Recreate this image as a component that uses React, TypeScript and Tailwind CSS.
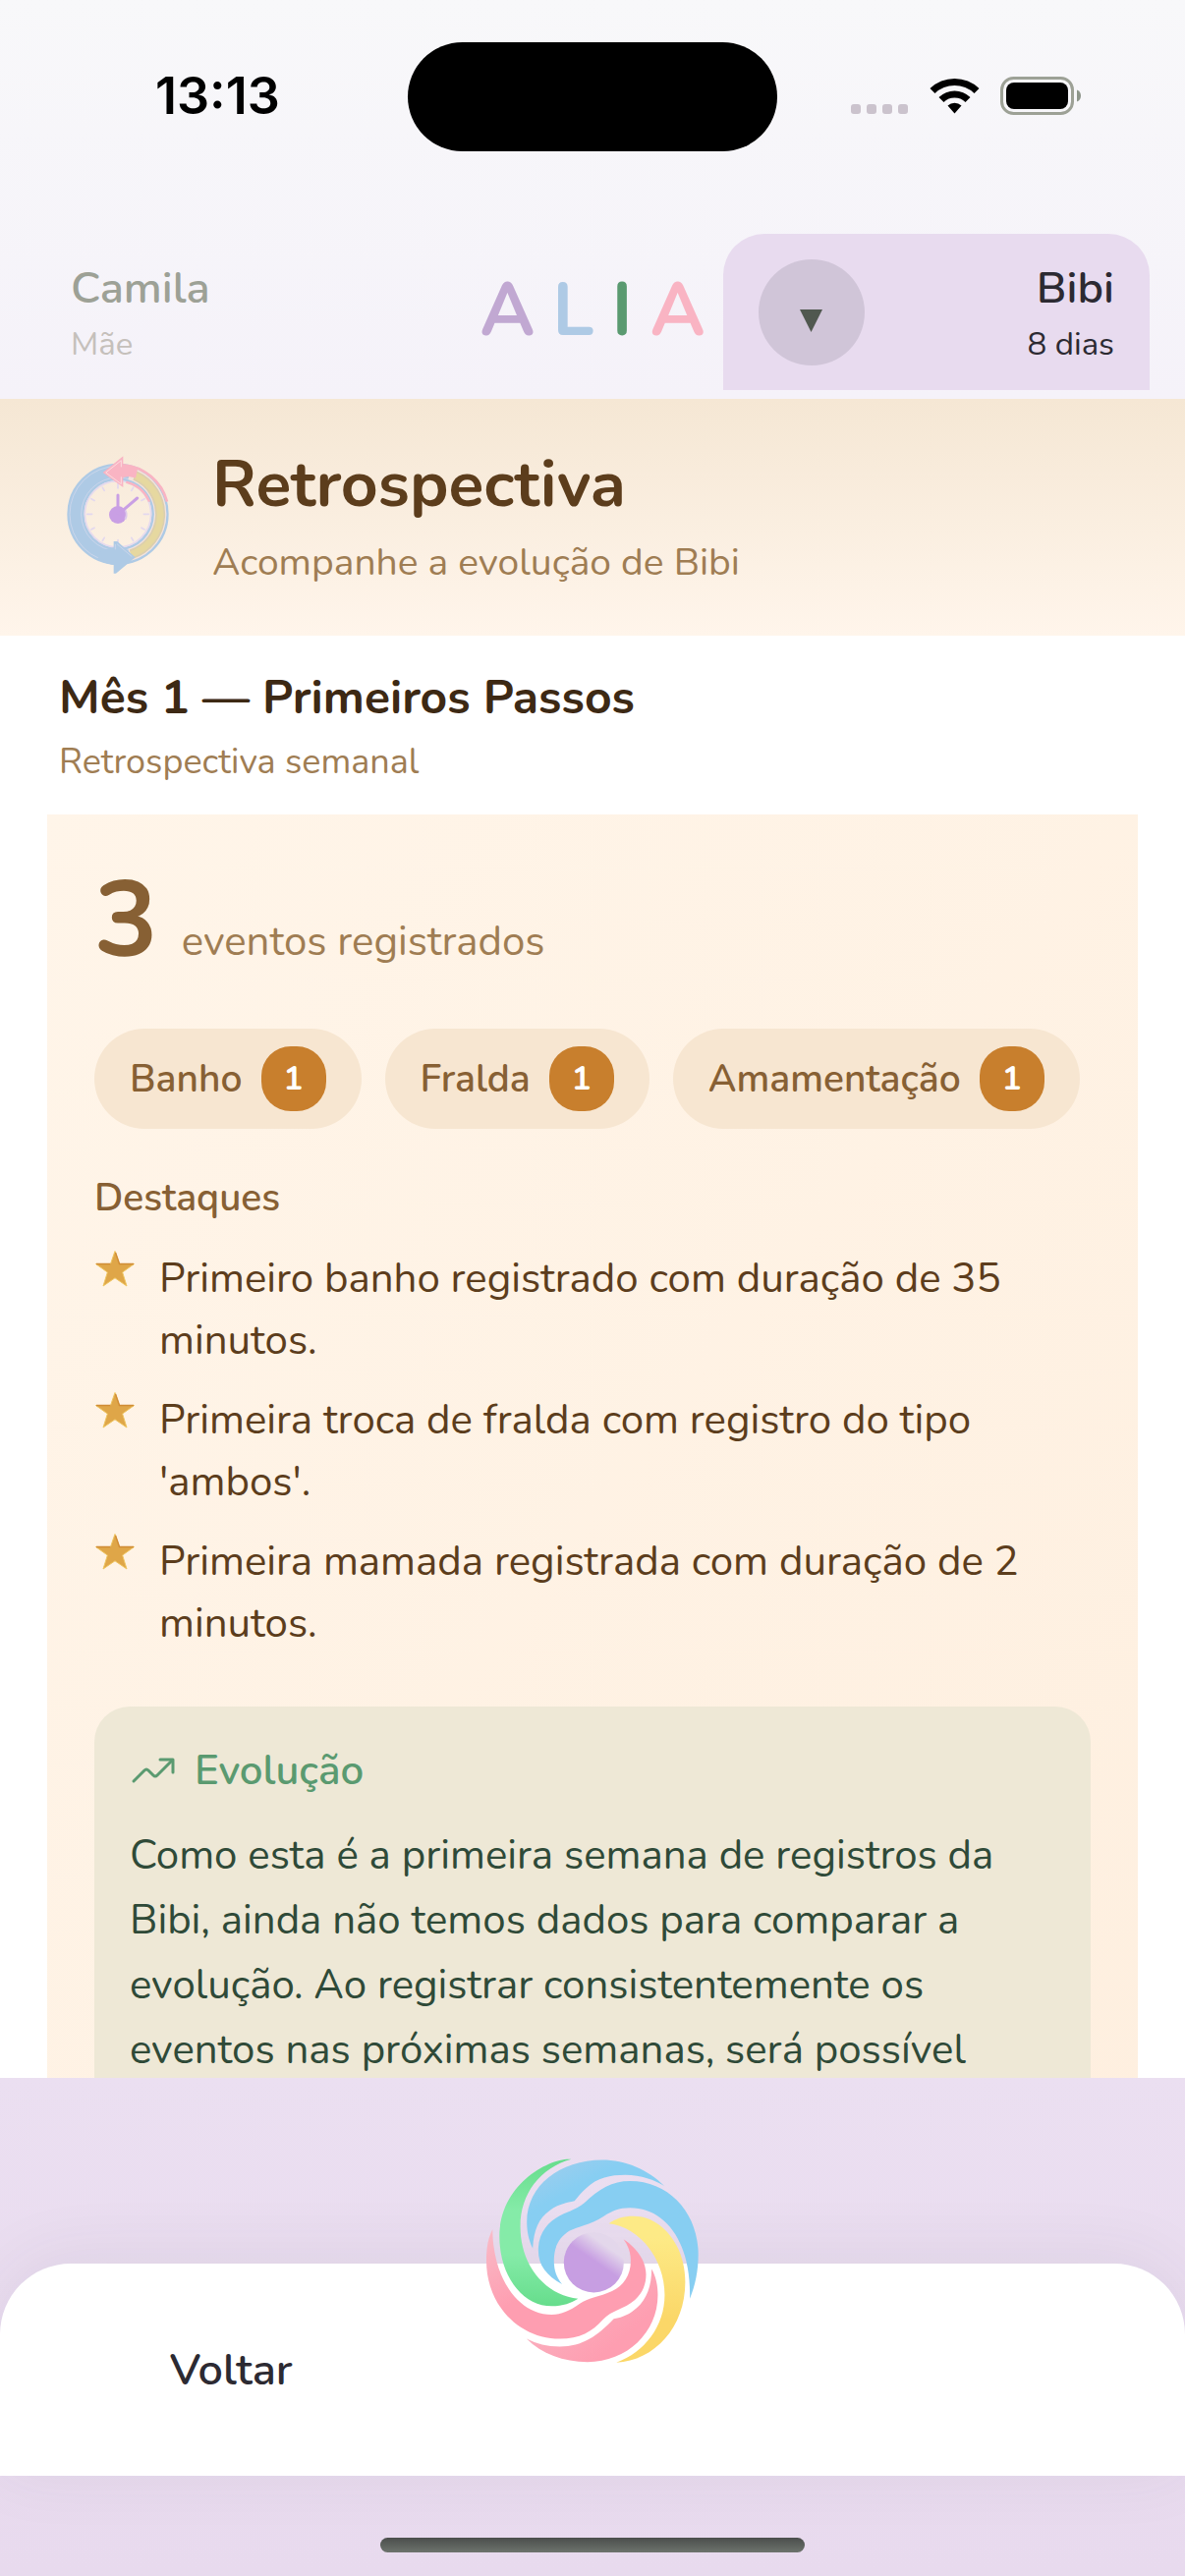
const categories = [
  { label: "Banho", count: 1 },
  { label: "Fralda", count: 1 },
  { label: "Amamentação", count: 1 },
];

const highlights = [
  "Primeiro banho registrado com duração de 35 minutos.",
  "Primeira troca de fralda com registro do tipo 'ambos'.",
  "Primeira mamada registrada com duração de 2 minutos.",
];

function StatusIcons() {
  return (
    <div className="flex items-center justify-self-end pr-[104px]">
      <svg width="60" height="40" viewBox="0 0 60 40" aria-hidden="true" fill="#cbc3cd">
        <rect x="1" y="28" width="10" height="10" rx="3" />
        <rect x="17" y="28" width="10" height="10" rx="3" />
        <rect x="33" y="28" width="10" height="10" rx="3" />
        <rect x="49" y="28" width="10" height="10" rx="3" />
      </svg>
      <svg className="ml-[20px]" width="53" height="40" viewBox="0 0 53 40" aria-hidden="true">
        <path d="M1.500 12 A36 36 0 0 1 51.500 12 L46.500 17 A29 29 0 0 0 6.500 17 Z" fill="#000" />
        <path d="M10.500 21 A23 23 0 0 1 42.500 21 L37.500 26 A16 16 0 0 0 15.500 26 Z" fill="#000" />
        <path d="M19.500 29.500 A10.500 10.500 0 0 1 33.500 29.500 L26.500 37.500 Z" fill="#000" />
      </svg>
      <svg className="ml-[20px]" width="84" height="40" viewBox="0 0 84 40" aria-hidden="true">
        <rect x="1.500" y="1.500" width="72" height="36" rx="12" fill="none" stroke="#9da196" strokeWidth="3" />
        <rect x="6" y="6" width="63" height="27" rx="8" fill="#000" />
        <path d="M78 13.500 C81 14.500 82 17 82 19.500 C82 22 81 24.500 78 25.500 Z" fill="#8d958a" />
      </svg>
    </div>
  );
}

function ClockIcon() {
  const ticks = [0, 30, 60, 90, 120, 150, 180, 210, 240, 270, 300, 330];
  return (
    <svg width="120" height="124" viewBox="30 66 360 372" aria-hidden="true">
      <circle cx="210" cy="250" r="129" fill="none" stroke="#aecae5" strokeWidth="52" />
      <circle cx="210" cy="250" r="101" fill="none" stroke="#e6daee" strokeWidth="5" />
      <circle cx="210" cy="250" r="147" fill="none" stroke="#d6dbee" strokeWidth="2" />
      <circle cx="210" cy="250" r="112" fill="none" stroke="#d6dbee" strokeWidth="2" />
      <path d="M226 100 A151 151 0 0 1 360 212" fill="none" stroke="#f9b4c3" strokeWidth="8" />
      <path d="M235 152 A103 103 0 0 1 306 212" fill="none" stroke="#f9b4c3" strokeWidth="7" />
      <path d="M246 126 A129 129 0 0 1 246 374" fill="none" stroke="#f3e3dc" strokeWidth="37" />
      <path d="M262 132 A129 129 0 0 1 250 373" fill="none" stroke="#dccfae" strokeWidth="30" />
      <path d="M262 132 A129 129 0 0 1 250 373" fill="none" stroke="#e6d8a0" strokeWidth="20" />
      {ticks.map((a) => (
        <path
          key={a}
          d={a % 90 === 0 ? "M210 156 V171" : "M210 156 V167"}
          stroke="#e3d8ee"
          strokeWidth="5"
          strokeLinecap="round"
          transform={`rotate(${a} 210 250)`}
        />
      ))}
      <circle cx="210" cy="252" r="27" fill="#c99fe4" />
      <path d="M228 233 A27 27 0 0 1 232 266" fill="none" stroke="#dcc8ea" strokeWidth="6" />
      <path d="M210 192 V246 M269 201 L214 248" stroke="#c99fe4" strokeWidth="9" strokeLinecap="round" fill="none" />
      <path d="M164 123 L226 73 V98 C242 100 256 104 270 112 L264 140 C250 135 238 134 226 138 V168 Z" fill="#f9b4c3" />
      <path d="M220 106 V86 L173 123 L220 158 V136" fill="none" stroke="#fcdcdf" strokeWidth="3" />
      <path d="M197 352 V333 L208 333 L263 382 L204 431 L197 431 V405 C180 402 160 395 148 386 L160 360 Z" fill="#aecae5" />
      <path d="M202 342 L202 358 M207 341 L253 380" fill="none" stroke="#d6dbee" strokeWidth="2" />
    </svg>
  );
}

function StarIcon() {
  return (
    <svg className="mt-[1px] h-[42px] w-[42px] shrink-0" viewBox="0 0 42 42" aria-hidden="true">
      <path
        d="M21 2.500 L25.500 15.500 L40.500 15.500 L28.600 24 L33 38 L21 29.800 L9 38 L13.400 24 L1.500 15.500 L16.500 15.500 Z"
        fill="#dfa648"
        stroke="#efc560"
        strokeWidth="1"
        strokeLinejoin="round"
      />
      <path d="M16.500 15.500 H2 M40 15.500 H25.500 L21.500 4" fill="none" stroke="#d08c34" strokeWidth="1.500" />
    </svg>
  );
}

function TrendIcon() {
  return (
    <svg className="h-[48px] w-[48px] shrink-0" viewBox="0 0 48 48" aria-hidden="true" fill="none" stroke="#5a9a70" strokeWidth="3" strokeLinecap="round" strokeLinejoin="round">
      <path d="M4 34 L15 23 Q17 21 19 23 L24 28 Q26 30 28 28 L43 13" />
      <path d="M31 12 H44 V25" />
    </svg>
  );
}

function SwirlLogo() {
  return (
    <svg width="216" height="209" viewBox="105 82 650 628" aria-hidden="true">
      <defs>
        <linearGradient id="swirl-core" x1="0.800" y1="0.100" x2="0.350" y2="0.750">
          <stop offset="0.200" stopColor="#e3d7eb" />
          <stop offset="0.600" stopColor="#c79ee2" />
        </linearGradient>
        <linearGradient id="swirl-green" x1="0.700" y1="0" x2="0.700" y2="1">
          <stop offset="0" stopColor="#66dd8c" />
          <stop offset="0.350" stopColor="#85eba8" />
          <stop offset="0.650" stopColor="#85eba8" />
          <stop offset="1" stopColor="#66dd8c" />
        </linearGradient>
        <linearGradient id="swirl-blue" x1="0" y1="0" x2="0.500" y2="0.600">
          <stop offset="0" stopColor="#a5cdec" />
          <stop offset="0.600" stopColor="#87cef2" />
        </linearGradient>
        <linearGradient id="swirl-yellow" x1="0" y1="0" x2="0" y2="1">
          <stop offset="0.150" stopColor="#fdea86" />
          <stop offset="0.700" stopColor="#fbd768" />
        </linearGradient>
        <linearGradient id="swirl-pink" x1="0" y1="0" x2="0.500" y2="0.600">
          <stop offset="0" stopColor="#f9bcc8" />
          <stop offset="0.800" stopColor="#fe9eb1" />
        </linearGradient>
        <linearGradient id="swirl-rose" x1="0" y1="0.400" x2="0.600" y2="0.900">
          <stop offset="0" stopColor="#f9b4c2" />
          <stop offset="1" stopColor="#fe9eb1" />
        </linearGradient>
      </defs>
      <path fill="url(#swirl-green)" d="M365 84 C300 78 145 160 145 320 C145 440 215 534 305 534 C340 534 365 524 386 511 C285 500 209 410 209 290 C209 190 270 110 365 84 Z" />
      <path fill="url(#swirl-blue)" d="M650 166 C600 115 530 86 460 86 C330 86 229 165 229 275 C229 310 236 335 247 357 C250 300 265 265 300 240 C330 220 350 218 375 212 C385 200 395 185 410 173 C445 140 485 132 530 132 C580 132 620 148 650 166 Z" />
      <path fill="#87cef2" d="M337 467 C290 440 264 410 264 362 C264 310 295 275 330 257 C365 240 380 238 405 218 C450 175 490 151 545 151 C665 151 754 250 754 375 C754 425 745 470 728 511 C733 340 655 233 545 233 C510 233 490 243 465 258 C420 286 385 290 360 303 C325 325 312 355 312 395 C312 425 320 445 337 467 Z" />
      <path fill="url(#swirl-yellow)" d="M480 281 C500 265 525 258 555 258 C645 258 714 350 714 460 C714 600 620 700 503 707 C590 675 651 595 651 500 C651 390 575 292 480 281 Z" />
      <path fill="url(#swirl-pink)" d="M124 298 C110 325 105 355 105 395 C105 530 205 634 330 634 C390 634 430 612 462 575 C490 545 525 545 560 515 C585 493 594 465 594 437 C594 395 565 355 525 329 C540 350 547 370 547 395 C547 440 525 470 490 488 C450 507 420 507 390 527 C360 548 335 560 305 560 C205 560 124 450 124 298 Z" />
      <path fill="url(#swirl-rose)" d="M611 420 C625 445 630 470 630 500 C630 615 535 705 415 705 C340 705 275 680 228 634 C260 650 290 658 330 658 C400 658 445 625 495 573 C525 568 545 558 565 540 C597 512 611 470 611 420 Z" />
      <circle cx="434" cy="400" r="92" fill="url(#swirl-core)" />
    </svg>
  );
}

export default function App() {
  return (
    <div className="flex h-screen flex-col overflow-hidden bg-white font-['Nunito','Noto_Sans',sans-serif]">
      <header className="shrink-0 bg-linear-to-b from-[#f8f8fa] to-[#f5f2f9] pb-[9px]">
        <div className="grid h-[196px] grid-cols-[1fr_376px_1fr] items-center">
          <time className="pl-[158px] font-['Inter',sans-serif] text-[52px] leading-[60px] font-semibold text-black">13:13</time>
          <div className="h-[111px] rounded-full bg-black" />
          <StatusIcons />
        </div>
        <div className="mt-[42px] grid grid-cols-[1fr_266px_1fr] items-stretch px-[36px]">
          <button type="button" className="flex flex-col justify-center gap-[4px] px-[36px] text-left">
            <span className="text-[45px] leading-[61px] font-semibold text-[#9da196]">Camila</span>
            <span className="text-[33px] leading-[45px] text-[#c5c0bb]">Mãe</span>
          </button>
          <div className="flex items-center justify-center gap-[18px] pb-[3px] text-[75px] leading-[102px] font-bold" aria-label="ALIA">
            <span className="text-[#c1a8d2]">A</span>
            <span className="text-[#aecae5]">L</span>
            <span className="text-[#5a9a70]">I</span>
            <span className="text-[#f9b4c3]">A</span>
          </div>
          <div className="flex h-[159px] items-center justify-between rounded-t-[42px] bg-[#e8dbef] px-[36px]">
            <button type="button" aria-label="Trocar bebê" className="flex h-[108px] w-[108px] items-center justify-center rounded-full bg-[#d0c5d8]">
              <svg className="mt-[18px]" width="24" height="24" viewBox="0 0 24 24" aria-hidden="true">
                <path d="M0 0 H23 L11.500 23 Z" fill="#50584f" />
              </svg>
            </button>
            <div className="flex flex-col gap-[4px] text-right text-[#2c2a32]">
              <span className="text-[45px] leading-[61px] font-semibold">Bibi</span>
              <span className="text-[33px] leading-[45px]">8 dias</span>
            </div>
          </div>
        </div>
      </header>

      <section className="flex shrink-0 items-center gap-[36px] bg-linear-to-b from-[#f5e7d4] to-[#fff5eb] px-[60px] pt-[42px] pb-[48px]">
        <ClockIcon />
        <div className="flex flex-col gap-[8px]">
          <h1 className="text-[66px] leading-[90px] font-bold text-[#5c3d1c]">Retrospectiva</h1>
          <p className="text-[39px] leading-[53px] text-[#9f7d53]">Acompanhe a evolução de Bibi</p>
        </div>
      </section>

      <main className="min-h-0 flex-1 overflow-hidden">
        <div className="flex flex-col gap-[8px] px-[60px] pt-[30px] pb-[28px]">
          <h2 className="text-[48px] leading-[66px] font-bold text-[#3d2914]">Mês 1 — Primeiros Passos</h2>
          <p className="text-[36px] leading-[50px] text-[#9f7d53]">Retrospectiva semanal</p>
        </div>

        <article className="mx-[48px] bg-linear-to-br from-[#fff5e9] to-[#feefdf] p-[48px]">
          <p className="flex items-baseline gap-[24px]">
            <span className="text-[108px] leading-[120px] font-bold text-[#876034]">3</span>
            <span className="text-[42px] leading-[57px] text-[#9f7d53]">eventos registrados</span>
          </p>

          <ul className="mt-[50px] flex flex-wrap gap-[24px]">
            {categories.map((c) => (
              <li key={c.label} className="flex items-center gap-[19px] rounded-full bg-[#f7e6d1] px-[36px] py-[18px]">
                <span className="text-[39px] leading-[53px] font-semibold text-[#876034]">{c.label}</span>
                <span className="flex h-[66px] w-[66px] items-center justify-center rounded-[30px] bg-[#c87f2d] text-[33px] leading-[45px] font-bold text-white">
                  {c.count}
                </span>
              </li>
            ))}
          </ul>

          <h3 className="mt-[44px] text-[39px] leading-[53px] font-semibold text-[#876034]">Destaques</h3>
          <ul className="mt-[24px] flex flex-col gap-[18px]">
            {highlights.map((h) => (
              <li key={h} className="flex gap-[24px]">
                <StarIcon />
                <p className="text-[42px] leading-[63px] text-[#5c3d1c]">{h}</p>
              </li>
            ))}
          </ul>

          <section className="mt-[53px] rounded-[36px] bg-[#eee8d6] p-[36px] pb-[96px]">
            <h3 className="flex items-center gap-[18px] pt-[1px] text-[42px] leading-[57px] font-semibold text-[#5a9a70]">
              <TrendIcon />
              Evolução
            </h3>
            <p className="mt-[25px] text-[42px] leading-[66px] text-[#2f4a38]">
              Como esta é a primeira semana de registros da Bibi, ainda não temos dados para comparar a evolução. Ao
              registrar consistentemente os eventos nas próximas semanas, será possível
            </p>
          </section>
        </article>
      </main>

      <footer className="shrink-0 overflow-hidden bg-linear-to-b from-[#ebdff1] to-[#e8daee] pt-[189px]">
        <nav className="relative flex h-[216px] items-center rounded-t-[72px] bg-white shadow-[0_-6px_72px_rgba(60,50,70,0.07)]">
          <button type="button" className="w-[39%] text-center text-[45px] leading-[61px] font-semibold text-[#2c2a32]">
            Voltar
          </button>
          <button type="button" aria-label="Início" className="absolute -top-[107px] left-1/2 -translate-x-1/2">
            <SwirlLogo />
          </button>
        </nav>
        <div className="flex h-[102px] items-end justify-center pb-[24px]">
          <div className="h-[15px] w-[432px] rounded-full bg-linear-to-b from-[#4b4e4c] to-[#6d736d]" />
        </div>
      </footer>
    </div>
  );
}
